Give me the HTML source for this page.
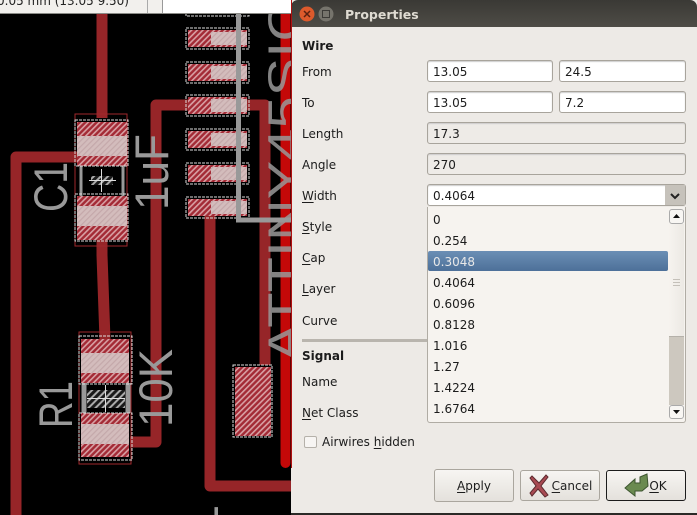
<!DOCTYPE html>
<html><head><meta charset="utf-8">
<style>
html,body{margin:0;padding:0;background:#000;overflow:hidden;width:697px;height:515px}
body{position:relative;font-family:"DejaVu Sans","Liberation Sans",sans-serif;font-size:12px;color:#1c1c1c}
.a{position:absolute}
rect[stroke]{shape-rendering:crispEdges}
#top{left:0;top:0;width:291px;height:14px;background:#f2f0ed;border-bottom:1px solid #8a8a86;box-sizing:border-box;overflow:hidden}
#top span{position:absolute;left:-3px;top:-6px;white-space:nowrap;color:#222}
#dlg{left:291px;top:0;width:406px;height:514px;background:#edeae6;overflow:hidden}
#tb{left:0;top:0;width:406px;height:27px;background:linear-gradient(#3a3935,#4e4c46);border-radius:7px 7px 0 0}
.l{position:absolute;left:11px;line-height:14px;white-space:nowrap}
.l u,.b u{text-underline-offset:2px}
.i{position:absolute;box-sizing:border-box;height:22px;border:1px solid #a8a49c;border-radius:3px;background:#fff;padding-left:5px;line-height:22px;box-shadow:inset 0 1px 1px #ccc}
.d{background:#eeebe7}
.r{position:absolute;left:142px;line-height:14px}
.b{position:absolute;box-sizing:border-box;border:1px solid #aaa69e;border-radius:3px;background:linear-gradient(#f7f5f2,#e4e1dc);text-align:center}
</style></head><body>
<svg class="a" style="left:0;top:0;display:block" width="291" height="515" viewBox="0 0 291 515">
<defs>
<pattern id="h" width="4" height="4" patternUnits="userSpaceOnUse" patternTransform="rotate(45)"><rect width="4" height="4" fill="#a32a35"/><rect width="1.600" height="4" fill="#d8a0a4"/></pattern>
<pattern id="o" width="4" height="4" patternUnits="userSpaceOnUse" patternTransform="rotate(45)"><rect width="4" height="4" fill="#d3bcbc"/><rect width="1.200" height="4" fill="#c4a8aa"/></pattern>
<pattern id="g" width="5" height="5" patternUnits="userSpaceOnUse" patternTransform="rotate(45)"><rect width="5" height="5" fill="#1a1a1a"/><rect width="2" height="5" fill="#aaa"/></pattern>
</defs>
<rect width="291" height="515" fill="#000"/>
<g fill="none" stroke="#962528" stroke-width="11" stroke-linejoin="round">
<path d="M102 14V118"/>
<path d="M102 240V255L105 340"/>
<path d="M16 515V157H80"/>
<path d="M130 442H156V105H265V365" />
<path d="M210 215V486H291"/>
</g>
<path d="M285.500 14V463" stroke="#c40808" stroke-width="10" stroke-linecap="round" fill="none"/>
<g fill="#999" font-family="'Liberation Sans',sans-serif">
<text transform="translate(67,212) rotate(-90)" font-size="47" textLength="50" lengthAdjust="spacingAndGlyphs">C1</text>
<text transform="translate(168,210) rotate(-90)" font-size="47" textLength="76" lengthAdjust="spacingAndGlyphs">1uF</text>
<text transform="translate(72,428) rotate(-90)" font-size="47" textLength="47" lengthAdjust="spacingAndGlyphs">R1</text>
<text transform="translate(172,427) rotate(-90)" font-size="47" textLength="78" lengthAdjust="spacingAndGlyphs">10K</text>
<text transform="translate(301,362) rotate(-90)" font-size="47" textLength="362" lengthAdjust="spacingAndGlyphs" fill-opacity=".85">ATTINY45SIC</text>
<text transform="translate(218,531) rotate(-90)" font-size="47">1</text>
</g>
<!-- IC pads -->
<g>
<rect x="186" y="6" width="63" height="10" fill="none" stroke="#ddd" stroke-dasharray="3 1"/>
<g id="pads">
<rect x="188" y="30" width="59" height="17" fill="url(#h)"/><rect x="211" y="32" width="36" height="13" fill="url(#o)"/><rect x="186" y="28" width="63" height="21" fill="none" stroke="#ddd" stroke-dasharray="3 1"/>
<rect x="188" y="64" width="59" height="17" fill="url(#h)"/><rect x="211" y="66" width="36" height="13" fill="url(#o)"/><rect x="186" y="62" width="63" height="21" fill="none" stroke="#ddd" stroke-dasharray="3 1"/>
<rect x="188" y="97" width="59" height="17" fill="url(#h)"/><rect x="211" y="99" width="36" height="13" fill="url(#o)"/><rect x="186" y="95" width="63" height="21" fill="none" stroke="#ddd" stroke-dasharray="3 1"/>
<rect x="188" y="131" width="59" height="17" fill="url(#h)"/><rect x="211" y="133" width="36" height="13" fill="url(#o)"/><rect x="186" y="129" width="63" height="21" fill="none" stroke="#ddd" stroke-dasharray="3 1"/>
<rect x="188" y="165" width="59" height="17" fill="url(#h)"/><rect x="211" y="167" width="36" height="13" fill="url(#o)"/><rect x="186" y="163" width="63" height="21" fill="none" stroke="#ddd" stroke-dasharray="3 1"/>
<rect x="188" y="199" width="59" height="17" fill="url(#h)"/><rect x="211" y="201" width="36" height="13" fill="url(#o)"/><rect x="186" y="197" width="63" height="21" fill="none" stroke="#ddd" stroke-dasharray="3 1"/>
</g>
<path d="M238.500 14V220H291" fill="none" stroke="#999" stroke-width="5"/>
</g>
<!-- C1 -->
<rect x="75" y="114" width="52" height="132" fill="none" stroke="#a0282c"/>
<path d="M81 165V196M123 165V196" stroke="#999" stroke-width="3"/>
<rect x="77" y="122" width="50" height="44" fill="url(#h)"/>
<rect x="77" y="136" width="50" height="20" fill="url(#o)"/>
<rect x="75" y="120" width="53" height="46" fill="none" stroke="#ddd" stroke-dasharray="3 1"/>
<rect x="77" y="196" width="50" height="44" fill="url(#h)"/>
<rect x="77" y="206" width="50" height="20" fill="url(#o)"/>
<rect x="75" y="194" width="53" height="47" fill="none" stroke="#ddd" stroke-dasharray="3 1"/>
<rect x="91" y="176" width="22" height="9" fill="url(#g)"/>
<path d="M89 180.500H116M101.500 169V192" stroke="#ddd"/>
<!-- R1 -->
<rect x="79" y="332" width="52" height="132" fill="none" stroke="#a0282c"/>
<path d="M84 383V413M128 383V413" stroke="#999" stroke-width="5"/>
<rect x="81" y="339" width="48" height="44" fill="url(#h)"/>
<rect x="81" y="353" width="48" height="20" fill="url(#o)"/>
<rect x="79" y="336" width="53" height="48" fill="none" stroke="#ddd" stroke-dasharray="3 1"/>
<rect x="81" y="413" width="48" height="44" fill="url(#h)"/>
<rect x="81" y="424" width="48" height="20" fill="url(#o)"/>
<rect x="79" y="413" width="53" height="47" fill="none" stroke="#ddd" stroke-dasharray="3 1"/>
<rect x="87" y="390" width="38" height="18" fill="url(#g)"/>
<path d="M87 398.500H125M105.500 385V412" stroke="#ddd"/>
<!-- big pad -->
<rect x="235" y="367" width="36" height="69" fill="url(#h)"/>
<rect x="233" y="365" width="39" height="72" fill="none" stroke="#ddd" stroke-dasharray="3 1"/>
</svg>
<div id="top" class="a"><span>0.05 mm (13.05 9.50)</span>
<div class="a" style="left:147px;top:0;width:1px;height:13px;background:#aaa"></div>
<div class="a" style="left:162px;top:0;width:129px;height:13px;background:#fff;border-left:1px solid #999"></div></div>
<div id="dlg" class="a">
<div id="tb" class="a"></div>
<svg class="a" style="left:0;top:0" width="50" height="27"><circle cx="16" cy="14" r="7.500" fill="#dd5a2c"/><path d="M13 11l6 6M19 11l-6 6" stroke="#5a2010" stroke-width="1.500"/><circle cx="35" cy="14" r="7.500" fill="#76746c"/><rect x="31.500" y="10.500" width="7" height="7" fill="none" stroke="#3c3b37"/></svg>
<div class="a" style="left:54px;top:7px;color:#dfdbd2;font-weight:bold;font-size:12.500px;line-height:15px">Properties</div>
<div class="l" style="top:39px;font-weight:bold">Wire</div>
<div class="l" style="top:65px">From</div>
<div class="l" style="top:96px">To</div>
<div class="l" style="top:127px">Length</div>
<div class="l" style="top:158px">Angle</div>
<div class="l" style="top:189px"><u>W</u>idth</div>
<div class="l" style="top:220px"><u>S</u>tyle</div>
<div class="l" style="top:251px"><u>C</u>ap</div>
<div class="l" style="top:282px"><u>L</u>ayer</div>
<div class="l" style="top:314px">Curve</div>
<div class="a" style="left:11px;top:339px;width:126px;height:3px;background:#b9b5ae"></div>
<div class="l" style="top:349px;font-weight:bold">Signal</div>
<div class="l" style="top:375px">Name</div>
<div class="l" style="top:406px"><u>N</u>et Class</div>
<div class="i" style="left:136px;top:60px;width:126px">13.05</div>
<div class="i" style="left:268px;top:60px;width:127px">24.5</div>
<div class="i" style="left:136px;top:91px;width:126px">13.05</div>
<div class="i" style="left:268px;top:91px;width:127px">7.2</div>
<div class="i d" style="left:136px;top:122px;width:259px">17.3</div>
<div class="i d" style="left:136px;top:153px;width:259px">270</div>
<div class="i" style="left:136px;top:184px;width:259px">0.4064</div>
<div class="a" style="left:374px;top:185px;width:20px;height:20px;background:#c6c2bb"></div>
<svg class="a" style="left:374px;top:185px" width="20" height="20"><path d="M6 9l4 4 4-4" fill="none" stroke="#222" stroke-width="2"/></svg>
<div class="a" style="left:136px;top:207px;width:259px;height:216px;box-sizing:border-box;background:#f6f3ef;border:1px solid #b0aca4;border-top:0;border-radius:0 0 3px 3px"></div>
<div class="a" style="left:137px;top:251px;width:240px;height:20px;background:linear-gradient(#6b8fb5,#4d7099);border-radius:2px"></div>
<div class="r" style="top:213px">0</div>
<div class="r" style="top:234px">0.254</div>
<div class="r" style="top:255px;color:#e8e8e8">0.3048</div>
<div class="r" style="top:276px">0.4064</div>
<div class="r" style="top:297px">0.6096</div>
<div class="r" style="top:318px">0.8128</div>
<div class="r" style="top:339px">1.016</div>
<div class="r" style="top:360px">1.27</div>
<div class="r" style="top:381px">1.4224</div>
<div class="r" style="top:402px">1.6764</div>
<div class="a" style="left:378px;top:224px;width:15px;height:113px;background:linear-gradient(90deg,#f6f3ef,#ece9e4);border-bottom:1px solid #b5b1aa;box-sizing:border-box"></div>
<div class="a" style="left:378px;top:337px;width:15px;height:68px;background:#cdc8bf"></div>
<div class="a" style="left:378px;top:209px;width:15px;height:15px;box-sizing:border-box;background:#f8f6f3;border:1px solid #aaa;border-radius:3px"></div>
<div class="a" style="left:378px;top:405px;width:15px;height:14px;box-sizing:border-box;background:#f8f6f3;border:1px solid #aaa;border-radius:3px"></div>
<svg class="a" style="left:378px;top:209px" width="15" height="210"><path d="M4 9l3.500-4 3.500 4zM4 201l3.500 4 3.500-4z" fill="#111"/><path d="M4 70.500h7M4 73.500h7M4 76.500h7" stroke="#c4c0b9"/></svg>
<div class="a" style="left:13px;top:436px;width:13px;height:12px;box-sizing:border-box;border:1px solid #b5b1aa;border-radius:2px;background:#f7f5f3"></div>
<div class="l" style="left:31px;top:435px">Airwires <u>h</u>idden</div>
<div class="b" style="left:143px;top:469px;width:80px;height:33px;line-height:33px"><u>A</u>pply</div>
<div class="b" style="left:229px;top:470px;width:80px;height:31px;line-height:30px;padding-left:24px;color:#222"><u>C</u>ancel</div>
<svg class="a" style="left:238px;top:473px" width="20" height="25"><path d="M3 3l7 7 7-8 2 2-7 9 7 9-3 2-7-8-6 7-2-3 6-7-6-8z" fill="#a84a52" stroke="#5c2a2e"/></svg>
<div class="b" style="left:315px;top:470px;width:80px;height:31px;line-height:30px;border-color:#1c1c1c;padding-left:24px"><u>O</u>K</div>
<svg class="a" style="left:333px;top:472px" width="25" height="26"><path d="M1 16L11 7v4h5V5l7-3 1 12-6 5h-7v5z" fill="#6a8a50" stroke="#3d5530"/></svg>
<div class="a" style="left:0;top:0;width:1px;height:468px;background:#b01010"></div>
</div>
<div class="a" style="left:291px;top:513px;width:406px;height:2px;background:#2b2a27"></div>
</body></html>
